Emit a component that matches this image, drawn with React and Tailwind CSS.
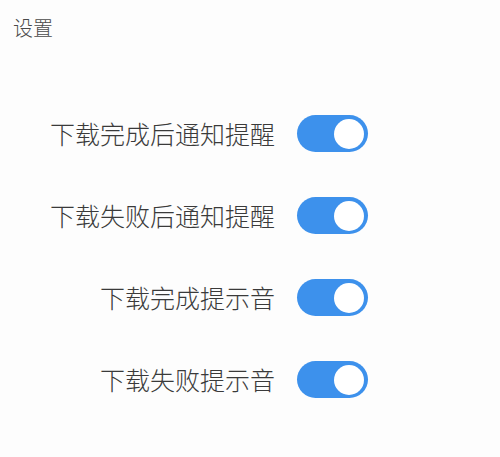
import React, { useState } from 'react';

const items = [
  '下载完成后通知提醒',
  '下载失败后通知提醒',
  '下载完成提示音',
  '下载失败提示音',
];

function Toggle({ on, onClick }) {
  return (
    <button
      onClick={onClick}
      className={`relative h-[37px] w-[71px] shrink-0 rounded-full transition-colors ${on ? 'bg-[#3d91ec]' : 'bg-[#d5d5d5]'}`}
    >
      <span
        className={`absolute top-[3.5px] h-[30px] w-[30px] rounded-full bg-white transition-all ${on ? 'left-[37px]' : 'left-[4px]'}`}
      />
    </button>
  );
}

export default function App() {
  const [state, setState] = useState([true, true, true, true]);

  return (
    <div
      className="h-[457px] w-[500px] bg-[#fdfdfd] text-[#3a3a3a]"
      style={{ fontFamily: '"Noto Sans CJK SC", "Noto Sans", sans-serif' }}
    >
      <div className="px-[13px] pt-[14px] text-[20px] font-light leading-[28px] text-[#4a4a4a]">设置</div>

      <div className="mt-[73px] flex flex-col gap-[45px]">
        {items.map((label, i) => (
          <div key={label} className="flex w-[368px] items-center justify-end gap-[22px]">
            <span className="text-[25px] font-light leading-[37px]">{label}</span>
            <Toggle
              on={state[i]}
              onClick={() => setState((s) => s.map((v, j) => (j === i ? !v : v)))}
            />
          </div>
        ))}
      </div>
    </div>
  );
}
